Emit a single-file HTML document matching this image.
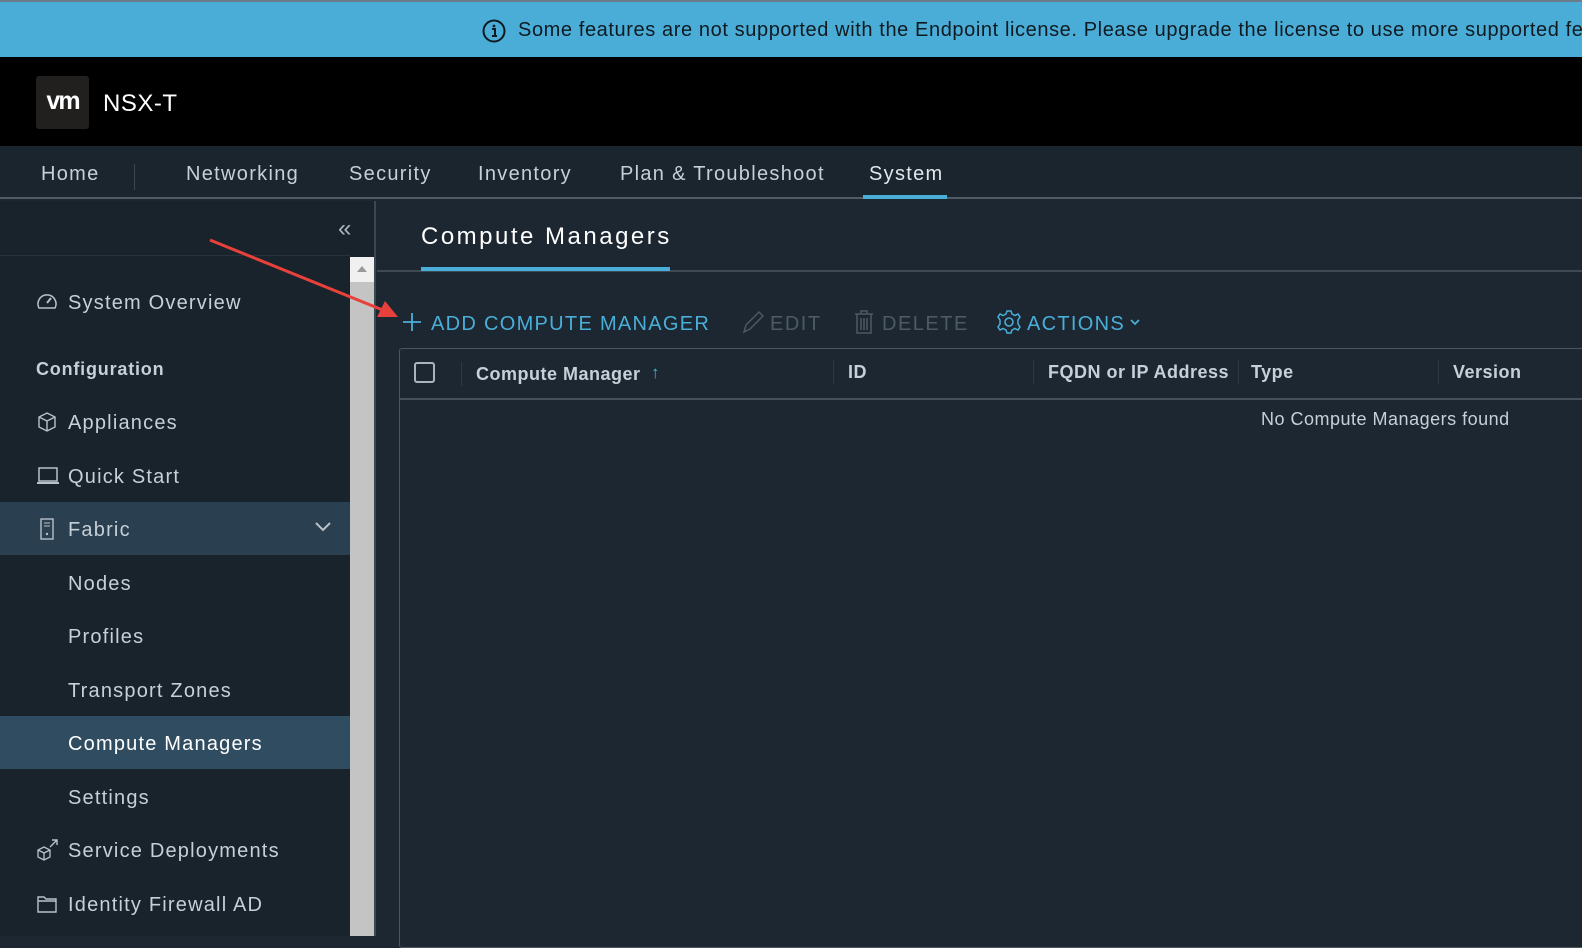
<!DOCTYPE html>
<html><head><meta charset="utf-8"><style>
*{margin:0;padding:0;box-sizing:border-box}
body{width:1582px;height:936px;overflow:hidden;background:#1c2731;font-family:"Liberation Sans",sans-serif;position:relative;color:#c9d3da}
.abs{position:absolute}
#banner{left:0;top:0;width:1582px;height:57px;background:#4aadd8;border-top:2px solid #6b7d88;color:#0f1a20;font-size:20px;white-space:nowrap;letter-spacing:0.6px}
#hdr{left:0;top:57px;width:1582px;height:89px;background:#000}
#logo{left:36px;top:76px;width:53px;height:53px;background:#22201e;border-radius:3px;color:#fff;font-weight:bold;font-size:25px;text-align:center;line-height:50px;letter-spacing:-2px}
#nav{left:0;top:146px;width:1582px;height:53px;background:#1b252e;border-bottom:2px solid #4f5c66}
.nv{position:absolute;top:163px;font-size:20px;color:#c6d0d8;letter-spacing:1.3px}
#side{left:0;top:201px;width:376px;height:735px;background:#19232c;border-right:2px solid #3a4852}
.si{position:absolute;left:68px;font-size:20px;color:#c6d0d8;letter-spacing:1.2px;margin-top:3px}
.ic{position:absolute;left:36px}
#main{left:377px;top:201px;width:1205px;height:735px;background:#1c2731}
.th{position:absolute;font-size:18px;font-weight:bold;color:#c6d0d8;letter-spacing:0.5px}
</style></head><body>
<div id="banner" class="abs">
<svg class="abs" style="left:482px;top:17px" width="24" height="24" viewBox="0 0 24 24"><circle cx="12" cy="12" r="10.5" fill="none" stroke="#0f1a20" stroke-width="2"/><circle cx="12" cy="7" r="1.4" fill="#0f1a20"/><path d="M10 10h3v7h2M10 17h5" stroke="#0f1a20" stroke-width="2" fill="none"/></svg>
<span class="abs" style="left:518px;top:17px">Some features are not supported with the Endpoint license. Please upgrade the license to use more supported features.</span>
</div>
<div id="hdr" class="abs"></div>
<div id="logo" class="abs">vm</div>
<div class="abs" style="left:103px;top:90px;color:#fff;font-size:24px;letter-spacing:0.5px">NSX-T</div>
<div id="nav" class="abs"></div>
<div class="nv" style="left:41px">Home</div>
<div class="abs" style="left:134px;top:164px;width:1px;height:26px;background:#3a4751"></div>
<div class="nv" style="left:186px">Networking</div>
<div class="nv" style="left:349px">Security</div>
<div class="nv" style="left:478px">Inventory</div>
<div class="nv" style="left:620px">Plan &amp; Troubleshoot</div>
<div class="nv" style="left:869px;color:#e0e8ee">System</div>
<div class="abs" style="left:863px;top:195px;width:84px;height:4px;background:#49afd9"></div>

<div id="side" class="abs"></div>
<div class="abs" style="left:0;top:255px;width:350px;height:1px;background:#27323b"></div>
<div class="abs" style="left:338px;top:215px;color:#aab5bd;font-size:24px">«</div>
<div class="abs" style="left:350px;top:257px;width:24px;height:679px;background:#c4c4c4"></div>
<div class="abs" style="left:350px;top:257px;width:24px;height:25px;background:#f0f0f0"></div>
<div class="abs" style="left:357px;top:266px;width:0;height:0;border-left:5px solid transparent;border-right:5px solid transparent;border-bottom:6px solid #999"></div>

<svg class="ic" style="top:291px" width="22" height="20" viewBox="0 0 22 20"><path d="M3 17A9 9 0 1 1 19 17Z" fill="none" stroke="#b7c2ca" stroke-width="1.5"/><path d="M11 12l4-5" stroke="#b7c2ca" stroke-width="2"/></svg>
<div class="si" style="top:289px">System Overview</div>
<div class="abs" style="left:36px;top:359px;font-size:18px;font-weight:bold;color:#c6d0d8;letter-spacing:0.8px">Configuration</div>
<svg class="ic" style="top:411px" width="22" height="22" viewBox="0 0 22 22"><path d="M11 2L19 6V16L11 20L3 16V6Z M3 6L11 10L19 6 M11 10V20" fill="none" stroke="#b7c2ca" stroke-width="1.4"/></svg>
<div class="si" style="top:409px">Appliances</div>
<svg class="ic" style="top:466px" width="24" height="20" viewBox="0 0 24 20"><rect x="3" y="2" width="18" height="13" fill="none" stroke="#b7c2ca" stroke-width="1.5"/><path d="M1 17H23" stroke="#b7c2ca" stroke-width="2"/></svg>
<div class="si" style="top:463px">Quick Start</div>
<div class="abs" style="left:0;top:502px;width:350px;height:53px;background:#2a3f4f"></div>
<svg class="ic" style="top:518px;left:40px" width="14" height="22" viewBox="0 0 14 22"><rect x="1" y="1" width="12" height="20" fill="none" stroke="#b7c2ca" stroke-width="1.4"/><path d="M4 5H10M4 8H10" stroke="#b7c2ca"/><circle cx="7" cy="16" r="1.2" fill="#b7c2ca"/></svg>
<div class="si" style="top:516px">Fabric</div>
<svg class="abs" style="left:314px;top:521px" width="18" height="12" viewBox="0 0 18 12"><path d="M2 2L9 9L16 2" fill="none" stroke="#b7c2ca" stroke-width="2"/></svg>
<div class="si" style="top:570px">Nodes</div>
<div class="si" style="top:623px">Profiles</div>
<div class="si" style="top:677px">Transport Zones</div>
<div class="abs" style="left:0;top:716px;width:350px;height:53px;background:#304c60"></div>
<div class="si" style="top:730px;color:#fff">Compute Managers</div>
<div class="si" style="top:784px">Settings</div>
<svg class="ic" style="top:838px" width="24" height="24" viewBox="0 0 24 24"><path d="M8 9L14 12V19L8 22L2 19V12Z M2 12L8 15L14 12 M8 15V22" fill="none" stroke="#b7c2ca" stroke-width="1.3"/><path d="M14 9L21 2M16 2H21V7" fill="none" stroke="#b7c2ca" stroke-width="1.4"/></svg>
<div class="si" style="top:837px">Service Deployments</div>
<svg class="ic" style="top:894px" width="22" height="20" viewBox="0 0 22 20"><path d="M2 3H8L10 5H20V18H2Z M2 7H20" fill="none" stroke="#b7c2ca" stroke-width="1.4"/></svg>
<div class="si" style="top:891px">Identity Firewall AD</div>

<div id="main" class="abs"></div>
<div class="abs" style="left:421px;top:223px;color:#fff;font-size:24px;letter-spacing:2.5px">Compute Managers</div>
<div class="abs" style="left:377px;top:270px;width:1205px;height:2px;background:#3e4a53"></div>
<div class="abs" style="left:421px;top:267px;width:249px;height:4px;background:#49afd9"></div>

<svg class="abs" style="left:402px;top:312px" width="20" height="20" viewBox="0 0 20 20"><path d="M10 1V19M1 10H19" stroke="#49afd9" stroke-width="1.8"/></svg>
<div class="abs" style="left:431px;top:313px;color:#49afd9;font-size:20px;letter-spacing:1.3px">ADD COMPUTE MANAGER</div>
<svg class="abs" style="left:740px;top:309px" width="26" height="26" viewBox="0 0 26 26"><path d="M4 23L6 16L19 3L23 7L10 20Z" fill="none" stroke="#4c5a64" stroke-width="1.5"/></svg>
<div class="abs" style="left:770px;top:313px;color:#4c5a64;font-size:20px;letter-spacing:1.5px">EDIT</div>
<svg class="abs" style="left:853px;top:309px" width="22" height="26" viewBox="0 0 22 26"><path d="M2 5H20M8 5V2H14V5M4 5V24H18V5M8 9V21M11 9V21M14 9V21" fill="none" stroke="#4c5a64" stroke-width="1.5"/></svg>
<div class="abs" style="left:882px;top:313px;color:#4c5a64;font-size:20px;letter-spacing:1.5px">DELETE</div>
<svg class="abs" style="left:996px;top:309px" width="26" height="26" viewBox="0 0 26 26"><circle cx="13" cy="13" r="4" fill="none" stroke="#49afd9" stroke-width="1.6"/><path d="M11 2H15L16 5L19 6.5L22 5L24 8L22 11V15L24 18L22 21L19 19.5L16 21L15 24H11L10 21L7 19.5L4 21L2 18L4 15V11L2 8L4 5L7 6.5L10 5Z" fill="none" stroke="#49afd9" stroke-width="1.5"/></svg>
<div class="abs" style="left:1027px;top:313px;color:#49afd9;font-size:20px;letter-spacing:1.3px">ACTIONS</div>
<svg class="abs" style="left:1129px;top:318px" width="12" height="8" viewBox="0 0 12 8"><path d="M2 2L6 6L10 2" fill="none" stroke="#49afd9" stroke-width="1.8"/></svg>

<div class="abs" style="left:399px;top:348px;width:1190px;height:600px;border:1px solid #4a5760;border-radius:3px;background:#1c2731"></div>
<div class="abs" style="left:400px;top:398px;width:1182px;height:2px;background:#46525b"></div>
<div class="abs" style="left:414px;top:362px;width:21px;height:21px;border:2px solid #a9b5bd;border-radius:3px"></div>
<div class="abs" style="left:461px;top:362px;width:1px;height:24px;background:#2e3a43"></div>
<div class="th" style="left:476px;top:364px">Compute Manager</div>
<div class="abs" style="left:651px;top:363px;font-size:17px;color:#49afd9">↑</div>
<div class="abs" style="left:833px;top:360px;width:1px;height:24px;background:#2e3a43"></div>
<div class="th" style="left:848px;top:362px">ID</div>
<div class="abs" style="left:1033px;top:360px;width:1px;height:24px;background:#2e3a43"></div>
<div class="th" style="left:1048px;top:362px">FQDN or IP Address</div>
<div class="abs" style="left:1238px;top:360px;width:1px;height:24px;background:#2e3a43"></div>
<div class="th" style="left:1251px;top:362px">Type</div>
<div class="abs" style="left:1438px;top:360px;width:1px;height:24px;background:#2e3a43"></div>
<div class="th" style="left:1453px;top:362px">Version</div>
<div class="abs" style="left:1261px;top:409px;font-size:18px;color:#c6d0d8;letter-spacing:0.5px">No Compute Managers found</div>

<svg class="abs" style="left:205px;top:235px" width="200" height="90" viewBox="0 0 200 90"><path d="M5 5L180 76" stroke="#e8403a" stroke-width="3"/><path d="M193 82L172 82L180 66Z" fill="#e8403a"/></svg>
</body></html>
